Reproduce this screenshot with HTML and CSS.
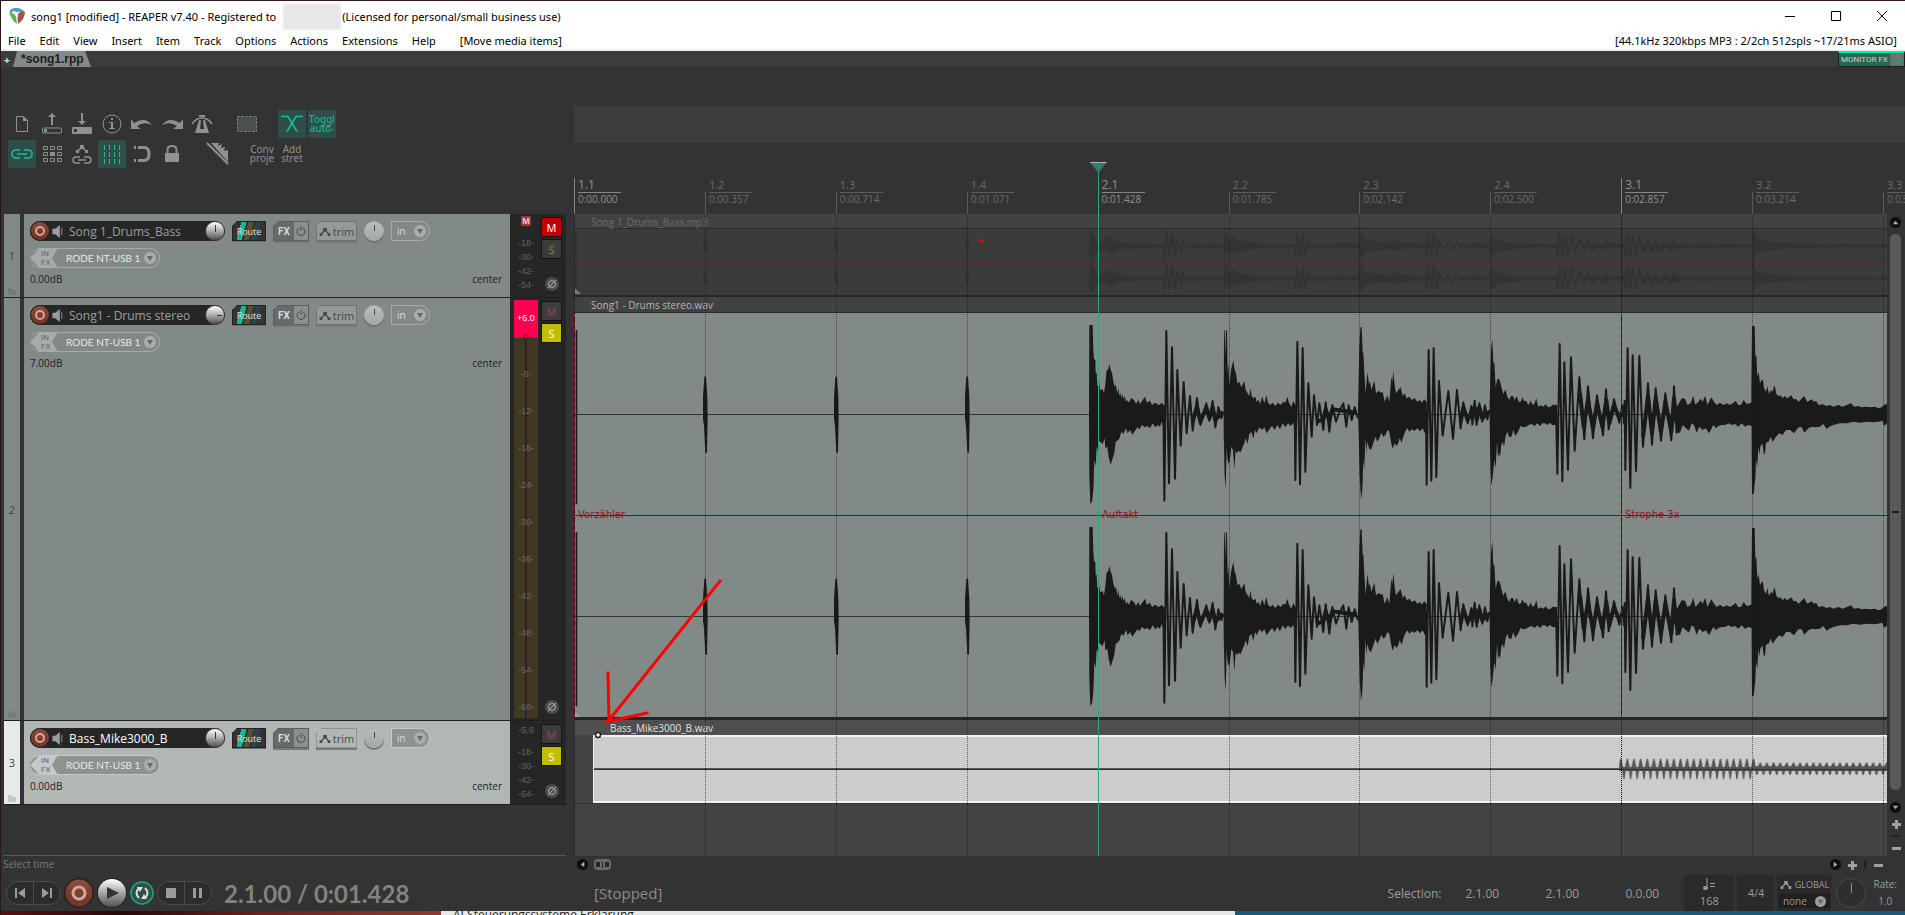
FILE: index.html
```html
<!DOCTYPE html>
<html lang="en">
<head>
    <meta charset="utf-8">
    <meta name="viewport" content="width=device-width, initial-scale=1">
    <title>song1 [modified] - REAPER v7.40</title>
    <link rel="stylesheet" href="styles.css">
</head>
<body>
<svg class="defs" aria-hidden="true">
    <defs>
        <symbol id="speaker" viewBox="0 0 12 14"><path d="M0 4h3l5-4v14l-5-4H0z" fill="#9a9c9b"/><path d="M10 3v8" stroke="#6c6e6d" stroke-width="1.500"/></symbol>
        <symbol id="power" viewBox="0 0 10 10"><path d="M3 2a4 4 0 1 0 4 0M5 0v5" fill="none" stroke="currentColor"/></symbol>
        <symbol id="trim" viewBox="0 0 12 10"><path d="M1 9l5-6 5 6" fill="none" stroke="currentColor" stroke-width="1.500"/><path d="M0 7h3v3H0zM4 1h4v4H4zM9 7h3v3H9z" fill="currentColor"/></symbol>
        <symbol id="drop" viewBox="0 0 12 12"><circle cx="6" cy="6" r="6" fill="currentColor"/><path class="drop-arrow" d="M3 4h6L6 9z"/></symbol>
        <symbol id="folder" viewBox="0 0 8 7"><path d="M0 0h4l1 2h3v5H0z" fill="currentColor"/></symbol>
        <symbol id="phase" viewBox="0 0 14 14"><circle cx="7" cy="7" r="7" fill="#4c4e4d"/><circle cx="7" cy="7" r="3.500" fill="none" stroke="#b0b2b1"/><path d="M3 11l8-8" stroke="#b0b2b1"/></symbol>
        <symbol id="rec" viewBox="0 0 20 20"><circle cx="10" cy="10" r="10" fill="#2a2020"/><circle cx="10" cy="10" r="9" fill="url(#red)"/><circle cx="10" cy="10" r="4" fill="none" stroke="#cfa9a0" stroke-width="2"/></symbol>
        <linearGradient id="red" x1="0" y1="0" x2="0" y2="1"><stop offset="0" stop-color="#8c4f43"/><stop offset=".4" stop-color="#82402f"/><stop offset="1" stop-color="#6e3527"/></linearGradient>
        <linearGradient id="silver" x1="0" y1="0" x2="0" y2="1"><stop offset="0" stop-color="#fff"/><stop offset=".5" stop-color="#a5a5a5"/><stop offset="1" stop-color="#505050"/></linearGradient>

        <!-- one drum channel, centre line at y = 0 -->
        <g id="drums">
            <g fill="currentColor">
                <path d="M5-253h5V270H5zM0-1h3939v2H0z"/>
                <path d="M391-113h5l4 60 1 60-2 108h-5l-4-80-3-20v-68zM784-113h5l4 60 1 60-2 108h-5l-4-80-3-20v-68zM1177-113h5l4 60 1 60-2 108h-5l-4-80-3-20v-68z"/>
            </g>
            <g fill="currentColor" transform="translate(1518 -373)">
                <path d="M27 373L28 105 38 105 40 180 42 207 46 210 47 250 50 248 52 290 57 276 60 300 68 298 72 310 76 282 80 240 84 240 88 222 92 240 96 248 100 275 105 290 108 285 112 312 115 294 118 318 121 308 124 325 127 312 131 328 134 318 138 335 142 330 147 338 153 324 162 330 168 342 175 330 180 342 188 330 196 320 200 338 210 332 216 345 226 338 236 346 246 338 250 345 250 410 245 395 240 410 233 405 226 412 218 400 210 415 202 408 194 412 186 405 178 418 172 412 165 422 157 434 150 420 143 430 138 415 130 432 124 425 118 446 112 452 107 455 103 490 98 505 92 525 86 500 82 470 76 475 74 445 68 462 60 455 55 450 53 482 50 470 47 528 43 510 40 600 36 635 31 642 28 560z"/>
                <path d="M431 350L432 120 434 122 436 200 438 120 441 122 443 250 445 218 448 290 453 240 460 210 464 240 468 250 472 280 478 275 484 292 493 273 497 300 503 310 508 318 511 294 515 318 520 325 526 320 530 335 536 330 540 342 547 320 553 340 559 315 564 338 571 345 578 338 586 348 594 338 602 345 610 335 616 338 622 320 627 338 634 350 640 333 646 345 646 430 640 398 632 408 624 400 616 412 608 400 600 418 592 405 584 420 576 408 568 418 560 430 553 412 546 420 538 412 530 430 525 420 520 446 514 425 508 432 503 462 497 445 493 460 488 470 482 487 476 482 470 490 467 480 463 537 459 480 454 470 449 515 446 522 442 505 440 470 437 597 434 560 431 430z"/>
                <path d="M834 360L838 170 841 112 845 112 848 190 850 186 853 250 857 310 862 246 867 282 870 275 874 300 883 272 888 310 896 303 904 308 908 306 914 335 922 316 928 335 934 260 937 275 940 243 944 285 948 310 955 300 962 292 968 318 974 310 980 325 988 320 995 330 1004 325 1012 335 1020 330 1026 338 1032 328 1040 335 1040 430 1034 428 1028 415 1020 424 1012 415 1004 422 996 418 988 425 982 415 975 425 970 440 965 458 959 445 955 458 950 468 944 460 938 476 933 455 928 425 922 420 916 435 910 440 904 428 898 445 892 455 886 440 880 460 873 480 867 475 862 455 859 488 856 440 853 537 850 510 847 600 843 628 839 560 836 430z"/>
                <path d="M1229 340L1233 180 1237 148 1240 220 1243 218 1247 290 1252 268 1256 266 1260 273 1264 290 1270 312 1276 298 1282 320 1288 330 1293 318 1299 318 1304 330 1310 318 1316 335 1322 335 1327 322 1332 333 1338 332 1345 345 1352 332 1358 345 1364 340 1369 325 1374 350 1382 346 1390 350 1397 343 1404 352 1412 350 1418 344 1428 345 1428 405 1416 405 1410 398 1403 405 1395 400 1388 400 1380 408 1372 400 1364 408 1355 402 1346 405 1338 410 1330 412 1322 408 1314 425 1306 438 1300 420 1294 440 1287 440 1282 425 1277 438 1272 470 1268 455 1264 465 1260 500 1257 490 1254 500 1251 455 1247 533 1243 510 1238 560 1234 588 1231 520 1229 390z"/>
                <path d="M1785 360L1797 340 1805 325 1815 326 1822 345 1832 340 1840 317 1846 345 1855 335 1862 326 1868 335 1876 317 1882 345 1894 322 1902 335 1910 345 1920 338 1930 345 1940 340 1950 345 1958 340 1967 333 1975 345 1983 345 1991 330 2000 342 2010 340 2016 336 2016 408 2005 405 1995 410 1985 400 1975 410 1965 402 1955 405 1945 400 1935 405 1925 405 1915 408 1908 415 1900 405 1887 430 1878 415 1868 420 1858 410 1850 428 1842 405 1835 400 1827 422 1818 415 1808 405 1800 428 1790 428z"/>
                <path d="M2014 300L2016 108 2024 108 2026 200 2029 195 2032 260 2036 247 2040 280 2045 270 2049 270 2052 295 2058 305 2062 288 2067 312 2073 300 2077 305 2084 286 2089 312 2096 318 2102 316 2108 325 2114 318 2122 325 2134 316 2141 328 2148 327 2156 335 2166 325 2172 318 2182 335 2195 328 2202 335 2208 332 2216 345 2228 343 2240 348 2250 345 2260 350 2275 345 2288 350 2300 345 2313 340 2322 350 2335 348 2345 352 2358 350 2370 352 2385 350 2395 355 2405 352 2412 345 2421 342 2421 400 2413 408 2407 392 2395 395 2380 397 2360 395 2340 398 2320 395 2300 400 2280 400 2260 405 2248 410 2240 416 2230 402 2220 410 2205 412 2195 410 2185 415 2173 428 2165 412 2155 412 2142 430 2130 420 2118 420 2108 435 2098 430 2088 440 2078 455 2072 440 2066 455 2058 458 2055 490 2052 494 2047 460 2041 470 2038 494 2035 470 2032 530 2028 510 2026 565 2021 612 2016 612z"/>
            </g>
            <g class="swing" transform="translate(1518 -373)">
                <path d="M250 345L253 632 259 123 267 580 276 172 285 566 292 240 302 467 311 276 320 430 330 318 338 422 351 324 361 405 379 340 388 392 398 333 406 412 415 352 424 385 430 365"/>
                <path d="M644 345L646 570 652 155 660 583 668 174 676 545 685 280 695 440 702 316 711 405 718 340 730 420 737 337 748 425 757 345 768 395 780 360 790 340 799 410 806 346 815 390 824 352 834 385"/>
                <path d="M1038 360L1040 584 1046 180 1054 572 1061 174 1069 562 1077 273 1088 437 1105 303 1119 446 1131 300 1142 415 1150 337 1163 400 1174 348 1177 403 1184 332 1190 405 1198 340 1207 395 1215 346 1222 388 1228 360"/>
                <path d="M1428 345L1432 551 1439 162 1447 574 1453 217 1464 540 1473 202 1484 482 1498 262 1513 448 1524 289 1539 445 1551 316 1569 436 1578 298 1586 418 1602 328 1618 398 1627 345 1632 400 1634 333 1636 540 1643 175 1651 594 1658 196 1668 543 1678 198 1689 470 1704 280 1716 464 1727 295 1743 452 1756 310 1774 451 1782 289 1790 428 1797 345"/>
            </g>
            <g class="swing-wide" transform="translate(1518 -373)">
                <path d="M338 395L351 350 361 395 379 352 388 385 398 352 406 390 428 365M711 395L730 388 737 358 748 390 757 358 830 368M1142 395L1150 352 1163 390 1184 352 1190 390 1198 352 1207 385 1225 365M1500 310L1511 410 1524 330 1539 415 1551 340 1567 410 1579 330 1588 400 1602 345 1618 385 1630 360M1689 440L1704 320 1716 430 1727 325 1743 425 1756 335 1774 425 1782 325 1790 400"/>
            </g>
        </g>
        <pattern id="bass-loud" width="6.650" height="68" patternUnits="userSpaceOnUse"><path d="M0 32h1L2.800 23h1.200L5.700 32h.95v4H0z" fill="#555"/><path d="M-1.800 35L-.5 45h1L1.900 35zM4.850 35l1.300 10h1L8.550 35z" fill="#555"/></pattern>
        <pattern id="bass-soft" width="6.650" height="68" patternUnits="userSpaceOnUse"><path d="M0 31h1l2-4h1l1.500 4h1.150v5H0z" fill="#555"/><path d="M0 35v5h.8L2 35zM6.650 35v5h-.8L4.700 35z" fill="#555"/></pattern>
    </defs>
</svg>

<header class="titlebar">
    <svg class="logo" viewBox="0 0 16 18"><path d="M1 3Q8-2 15 4L12 7Q7 3 1 6z" fill="#4d9fc4"/><path d="M0 5Q6 6 7 10l1 7Q3 14 0 5z" fill="#58b947"/><path d="M9 6q5-3 7-1 0 7-7 12-1-6 0-11z" fill="#a8524f"/><path d="M4 4q3 1 4 5 0-4 3-4" fill="none" stroke="#fff"/></svg>
    <span>song1 [modified] - REAPER v7.40 - Registered to</span>
    <span class="redacted"></span>
    <span>(Licensed for personal/small business use)</span>
    <div class="window-buttons">
        <button aria-label="Minimize"><svg viewBox="0 0 10 10"><path d="M0 5.500h10"/></svg></button>
        <button aria-label="Maximize"><svg viewBox="0 0 10 10"><path d="M.5.5h9v9h-9z"/></svg></button>
        <button aria-label="Close"><svg viewBox="0 0 10 10"><path d="M0 0l10 10M10 0L0 10"/></svg></button>
    </div>
</header>
<nav class="menubar">
    <a href="#">File</a>
    <a href="#">Edit</a>
    <a href="#">View</a>
    <a href="#">Insert</a>
    <a href="#">Item</a>
    <a href="#">Track</a>
    <a href="#">Options</a>
    <a href="#">Actions</a>
    <a href="#">Extensions</a>
    <a href="#">Help</a>
    <a href="#" class="last-action">[Move media items]</a>
    <span class="audio-state">[44.1kHz 320kbps MP3 : 2/2ch 512spls ~17/21ms ASIO]</span>
</nav>
<div class="tabbar">
    <button class="tab-add" aria-label="New project tab">+</button>
    <a href="#" class="tab">*song1.rpp</a>
    <div class="monitor-fx"><button class="monitor-name">MONITOR FX</button><button class="monitor-power" aria-label="Bypass monitor FX"><svg><use href="#power"/></svg></button></div>
</div>

<main class="workspace">
    <section class="left">
        <div class="toolbar">
            <div class="toolrow">
                <button aria-label="New"><svg viewBox="0 0 28 28"><path d="M8.500 6.500h7l4 4v11h-11z" fill="none" stroke="currentColor"/><path d="M15 6v5h5z" fill="currentColor"/></svg></button>
                <button aria-label="Open"><svg viewBox="0 0 28 28"><rect x="4.500" y="18" width="19" height="5" rx="1" fill="none" stroke="currentColor"/><path d="M6 19h3v3H6zM13 15V7h-3l4-4 4 4h-3v8z" fill="currentColor"/></svg></button>
                <button aria-label="Save"><svg viewBox="0 0 28 28"><path d="M5 17h18q1 0 1 1v5q0 1-1 1H5q-1 0-1-1v-5q0-1 1-1zm1 2v3h3v-3zM13 3v8h-3l4 4 4-4h-3V3z" fill="currentColor" fill-rule="evenodd"/></svg></button>
                <button aria-label="Project settings"><svg viewBox="0 0 28 28"><circle cx="14" cy="14" r="9" fill="none" stroke="currentColor"/><path d="M13 8h2v2h-2zM11 12h4v6h2v1h-6v-1h2v-5h-2z" fill="currentColor"/></svg></button>
                <button aria-label="Undo"><svg viewBox="0 0 28 28"><path d="M3 9v10h10l-4-3q7-5 15-1-7-9-18-2z" fill="currentColor"/></svg></button>
                <button aria-label="Redo"><svg viewBox="0 0 28 28"><path d="M25 9v10H15l4-3q-7-5-15-1 7-9 18-2z" fill="currentColor"/></svg></button>
                <button aria-label="Metronome"><svg viewBox="0 0 28 28"><path d="M11 10h2l-1 9h4l-1-9h2l4 13H7z" fill="currentColor"/><path d="M4 14q4-6 10-6t10 6" fill="none" stroke="currentColor" stroke-width="1.500"/><path d="M11 5h6v2h-6z" fill="currentColor"/></svg></button>
                <span class="tool-gap"></span>
                <button aria-label="Marquee"><svg viewBox="0 0 28 28"><rect x="4.500" y="6.500" width="19" height="15" fill="#4b504f" stroke="currentColor" stroke-dasharray="2 2"/></svg></button>
                <span class="tool-gap"></span>
                <button class="on" aria-label="Auto crossfade"><svg viewBox="0 0 28 28"><path d="M3 6.500h7l9 15M25 6.500h-7L9 21.500" fill="none" stroke="currentColor" stroke-width="1.500"/></svg></button>
                <button class="on">Toggl<br>auto-</button>
            </div>
            <div class="toolrow">
                <button class="on" aria-label="Item grouping"><svg viewBox="0 0 28 28"><path d="M12 10H8q-4 0-4 4t4 4h4M16 10h4q4 0 4 4t-4 4h-4M9 14h10" fill="none" stroke="currentColor" stroke-width="1.500"/></svg></button>
                <button aria-label="Ripple edit"><svg viewBox="0 0 28 28"><path d="M5.500 6.500h4v3h-4zM12.500 6.500h4v3h-4zM19.500 6.500h4v3h-4zM5.500 12.500h4v3h-4zM19.500 12.500h4v3h-4zM5.500 18.500h4v3h-4zM12.500 18.500h4v3h-4zM19.500 18.500h4v3h-4z" fill="none" stroke="currentColor"/><path d="M12 12h5v4h-5z" fill="currentColor"/></svg></button>
                <button aria-label="Move envelopes"><svg viewBox="0 0 28 28"><path d="M9 12l5-5 5 5M12 17H8q-3 0-3 3t3 3h4M16 17h4q3 0 3 3t-3 3h-4M10 20h8" fill="none" stroke="currentColor" stroke-width="1.500"/><path d="M8 10h3v3H8zM12 5h4v3h-4zM17 10h3v3h-3z" fill="currentColor"/></svg></button>
                <button class="on" aria-label="Grid lines"><svg viewBox="0 0 28 28"><path d="M6.500 5v19M11.500 5v19M16.500 5v19M21.500 5v19" stroke="currentColor" stroke-dasharray="5 2"/></svg></button>
                <button aria-label="Snap"><svg viewBox="0 0 28 28"><path d="M10 7.500h6q5 0 5 6.500t-5 6.500h-6" fill="none" stroke="currentColor" stroke-width="3"/><path d="M6 6h2v3H6zM6 19h2v3H6z" fill="currentColor"/></svg></button>
                <button aria-label="Lock"><svg viewBox="0 0 28 28"><path d="M7 13h14v9H7z" fill="currentColor"/><path d="M9.500 13v-3q0-4 4.500-4t4.500 4v3" fill="none" stroke="currentColor" stroke-width="2"/></svg></button>
                <span class="tool-gap"></span>
                <button aria-label="Razor edit"><svg viewBox="0 0 28 28"><path d="M8 3h8l-1 3 4-2-1 4 4-1-1 4 4-1v12z" fill="currentColor"/><path d="M4 3l21 21" stroke="currentColor" stroke-width="2"/></svg></button>
                <span class="tool-gap"></span>
                <button>Conv<br>proje</button>
                <button>Add<br>stret</button>
            </div>
        </div>

        <article class="track">
            <div class="track-number">1<svg><use href="#folder"/></svg></div>
            <div class="track-panel">
                <div class="track-row">
                    <div class="namebar">
                        <button aria-label="Record arm"><svg class="rec"><use href="#rec"/></svg></button>
                        <svg class="speaker"><use href="#speaker"/></svg>
                        <input class="name" type="text" value="Song 1_Drums_Bass" aria-label="Track 1 name">
                        <input class="knob bright" type="range" aria-label="Track 1 volume">
                    </div>
                    <button class="route">Route</button>
                    <div class="fx"><button>FX</button><button aria-label="Bypass FX"><svg><use href="#power"/></svg></button></div>
                    <button class="trim"><svg><use href="#trim"/></svg>trim</button>
                    <input class="knob flat" type="range" aria-label="Track 1 pan">
                    <label class="in"><select aria-label="Track 1 input mode"><option>in</option></select><svg><use href="#drop"/></svg></label>
                </div>
                <label class="infx"><span class="infx-tag">IN<br>FX</span><select aria-label="Track 1 input"><option>RODE NT-USB 1</option></select><svg><use href="#drop"/></svg></label>
                <div class="track-values"><span>0.00dB</span><span>center</span></div>
            </div>
            <div class="track-meter">
                <div class="scale short"><b class="muted-tag">M</b><i>-18-</i><i>-30-</i><i>-42-</i><i>-54-</i></div>
                <div class="track-buttons"><button class="mute active">M</button><button class="solo">S</button><button class="phase" aria-label="Phase"><svg><use href="#phase"/></svg></button></div>
            </div>
        </article>

        <article class="track tall">
            <div class="track-number">2<svg><use href="#folder"/></svg></div>
            <div class="track-panel">
                <div class="track-row">
                    <div class="namebar">
                        <button aria-label="Record arm"><svg class="rec"><use href="#rec"/></svg></button>
                        <svg class="speaker"><use href="#speaker"/></svg>
                        <input class="name" type="text" value="Song1 - Drums stereo" aria-label="Track 2 name">
                        <input class="knob bright turned" type="range" aria-label="Track 2 volume">
                    </div>
                    <button class="route">Route</button>
                    <div class="fx"><button>FX</button><button aria-label="Bypass FX"><svg><use href="#power"/></svg></button></div>
                    <button class="trim"><svg><use href="#trim"/></svg>trim</button>
                    <input class="knob flat" type="range" aria-label="Track 2 pan">
                    <label class="in"><select aria-label="Track 2 input mode"><option>in</option></select><svg><use href="#drop"/></svg></label>
                </div>
                <label class="infx"><span class="infx-tag">IN<br>FX</span><select aria-label="Track 2 input"><option>RODE NT-USB 1</option></select><svg><use href="#drop"/></svg></label>
                <div class="track-values"><span>7.00dB</span><span>center</span></div>
            </div>
            <div class="track-meter">
                <div class="scale long"><b>+6.0</b><i class="zero">-0-</i><i>-6-</i><i>-12-</i><i>-18-</i><i>-24-</i><i>-30-</i><i>-36-</i><i>-42-</i><i>-48-</i><i>-54-</i><i>-60-</i></div>
                <div class="track-buttons"><button class="mute">M</button><button class="solo active">S</button><button class="phase" aria-label="Phase"><svg><use href="#phase"/></svg></button></div>
            </div>
        </article>

        <article class="track selected">
            <div class="track-number">3<svg><use href="#folder"/></svg></div>
            <div class="track-panel">
                <div class="track-row">
                    <div class="namebar">
                        <button aria-label="Record arm"><svg class="rec"><use href="#rec"/></svg></button>
                        <svg class="speaker"><use href="#speaker"/></svg>
                        <input class="name" type="text" value="Bass_Mike3000_B" aria-label="Track 3 name">
                        <input class="knob bright" type="range" aria-label="Track 3 volume">
                    </div>
                    <button class="route">Route</button>
                    <div class="fx"><button>FX</button><button aria-label="Bypass FX"><svg><use href="#power"/></svg></button></div>
                    <button class="trim"><svg><use href="#trim"/></svg>trim</button>
                    <input class="knob flat" type="range" aria-label="Track 3 pan">
                    <label class="in"><select aria-label="Track 3 input mode"><option>in</option></select><svg><use href="#drop"/></svg></label>
                </div>
                <label class="infx"><span class="infx-tag">IN<br>FX</span><select aria-label="Track 3 input"><option>RODE NT-USB 1</option></select><svg><use href="#drop"/></svg></label>
                <div class="track-values"><span>0.00dB</span><span>center</span></div>
            </div>
            <div class="track-meter">
                <div class="scale short"><i class="peak">-5.9</i><i>-18-</i><i>-30-</i><i>-42-</i><i>-54-</i></div>
                <div class="track-buttons"><button class="mute">M</button><button class="solo active">S</button><button class="phase" aria-label="Phase"><svg><use href="#phase"/></svg></button></div>
            </div>
        </article>
        <div class="tracks-rest"></div>
        <div class="hint">Select time</div>
    </section>

    <section class="right">
        <div class="region-lane"></div>
        <div class="ruler">
            <div class="tick bar"><b>1.1</b><span>0:00.000</span></div>
            <div class="tick"><b>1.2</b><span>0:00.357</span></div>
            <div class="tick"><b>1.3</b><span>0:00.714</span></div>
            <div class="tick"><b>1.4</b><span>0:01.071</span></div>
            <div class="tick bar"><b>2.1</b><span>0:01.428</span></div>
            <div class="tick"><b>2.2</b><span>0:01.785</span></div>
            <div class="tick"><b>2.3</b><span>0:02.142</span></div>
            <div class="tick"><b>2.4</b><span>0:02.500</span></div>
            <div class="tick bar"><b>3.1</b><span>0:02.857</span></div>
            <div class="tick"><b>3.2</b><span>0:03.214</span></div>
            <div class="tick"><b>3.3</b><span>0:03.571</span></div>
        </div>
        <div class="arrange-wrap">
            <div class="arrange">
                <div class="lane muted">
                    <div class="item-label">Song 1_Drums_Bass.mp3</div>
                    <div class="item">
                        <svg viewBox="0 0 3939 65" preserveAspectRatio="none"><use href="#drums" transform="translate(0 16.500) scale(1 .0556)"/><use href="#drums" transform="translate(0 48.500) scale(1 .0556)"/></svg>
                    </div>
                </div>
                <div class="lane tall">
                    <div class="item-label">Song1 - Drums stereo.wav</div>
                    <div class="item">
                        <svg viewBox="0 0 3939 1212" preserveAspectRatio="none"><use href="#drums" y="304"/><use href="#drums" y="910"/></svg>
                        <div class="markers"><span>Vorzähler</span><span>Auftakt</span><span>Strophe 3x</span></div>
                    </div>
                </div>
                <div class="lane selected">
                    <div class="item-label">Bass_Mike3000_B.wav</div>
                    <div class="item">
                        <svg viewBox="0 0 1294 68" preserveAspectRatio="none"><path d="M0 33h1294v1H0z" fill="#555"/><rect x="1026" width="136" height="68" fill="url(#bass-loud)"/><rect x="1162" width="132" height="68" fill="url(#bass-soft)"/></svg>
                    </div>
                </div>
                <div class="gridlines"><i class="bar"></i><i></i><i></i><i></i><i class="bar"></i><i></i><i></i><i></i><i class="bar"></i><i></i><i></i></div>
                <div class="cursor"></div>
                <svg class="annotation"><path d="M146 367L36 505M34 459l1 48M73 499l-41 9" fill="none" stroke="#f00" stroke-width="3" stroke-linecap="square"/><path d="M406 25h3v3h-3z" fill="#f00"/><path d="M1 74v6h6zM1 497v6h6z" fill="#a5aaa8" opacity=".6"/><circle cx="24" cy="521" r="2.500" fill="#fff" stroke="#222" stroke-width="1.500"/></svg>
            </div>
            <div class="vscroll">
                <button class="round" aria-label="Scroll up"><svg viewBox="0 0 12 12"><path d="M3 8h6L6 4z"/></svg></button>
                <div class="thumb"></div>
                <button class="round" aria-label="Scroll down"><svg viewBox="0 0 12 12"><path d="M3 4h6L6 8z"/></svg></button>
                <button class="zoom" aria-label="Zoom in vertically"><svg viewBox="0 0 10 10"><path d="M4 1h3v3h3v3H7v3H4V7H1V4h3z"/></svg></button>
                <hr>
                <button class="zoom" aria-label="Zoom out vertically"><svg viewBox="0 0 10 10"><path d="M1 4h9v3H1z"/></svg></button>
            </div>
        </div>
        <div class="hscroll">
            <button class="round" aria-label="Scroll left"><svg viewBox="0 0 12 12"><path d="M8 3v6L4 6z"/></svg></button>
            <button class="hthumb" aria-label="Scroll position"><svg viewBox="0 0 17 11"><rect width="17" height="11" rx="4" fill="#6a6a6a"/><path d="M8 3h1v6H8zM2 3h4v5H2zM11 3h4v5h-4z" fill="#262626"/></svg></button>
            <span class="push"></span>
            <button class="round" aria-label="Scroll right"><svg viewBox="0 0 12 12"><path d="M4 3v6l4-3z"/></svg></button>
            <button class="zoom" aria-label="Zoom in"><svg viewBox="0 0 10 10"><path d="M4 1h3v3h3v3H7v3H4V7H1V4h3z"/></svg></button>
            <hr>
            <button class="zoom" aria-label="Zoom out"><svg viewBox="0 0 10 10"><path d="M1 4h9v3H1z"/></svg></button>
        </div>
    </section>
</main>

<footer class="transport">
    <div class="transport-buttons">
        <div class="pair">
            <button aria-label="Go to start"><svg viewBox="0 0 10 10"><path d="M0 0h2v10H0zM10 0v10L3 5z"/></svg></button>
            <button aria-label="Go to end"><svg viewBox="0 0 10 10"><path d="M8 0h2v10H8zM0 0v10l7-5z"/></svg></button>
        </div>
        <button class="big" aria-label="Record"><svg viewBox="0 0 20 20"><use href="#rec"/></svg></button>
        <button class="big" aria-label="Play"><svg viewBox="0 0 30 30"><circle cx="15" cy="15" r="15" fill="#222"/><circle cx="15" cy="15" r="14" fill="url(#silver)"/><path d="M10 9l12 6-12 6z" fill="#333"/></svg></button>
        <button class="loop" aria-label="Repeat"><svg viewBox="0 0 24 24"><circle cx="12" cy="12" r="11" fill="#2d5047" stroke="#18a883" stroke-width="1.500"/><path d="M9 17q-5-5 0-10M15 7q5 5 0 10" fill="none" stroke="#ddd" stroke-width="2"/><path d="M7 6h6l-3 5zM17 18h-6l3-5z" fill="#ddd"/></svg></button>
        <div class="pair">
            <button aria-label="Stop"><svg viewBox="0 0 10 10"><path d="M0 0h10v10H0z"/></svg></button>
            <button aria-label="Pause"><svg viewBox="0 0 10 10"><path d="M0 0h3v10H0zM6 0h3v10H6z"/></svg></button>
        </div>
    </div>
    <output class="position">2.1.00 / 0:01.428</output>
    <output class="play-state">[Stopped]</output>
    <div class="selection"><span>Selection:</span><span>2.1.00</span><span>2.1.00</span><span>0.0.00</span></div>
    <div class="tempo"><svg viewBox="0 0 12 12"><path d="M4 0v9M7 5.500h5M7 8.500h5" stroke="#a0a0a0"/><ellipse cx="2.500" cy="10" rx="2.500" ry="2" fill="#a0a0a0"/></svg><span>168</span></div>
    <div class="signature">4/4</div>
    <div class="global"><span><svg><use href="#trim"/></svg>GLOBAL</span><label><select aria-label="Global automation override"><option>none</option></select><svg><use href="#drop"/></svg></label></div>
    <input class="rate-knob" type="range" aria-label="Playback rate">
    <div class="rate"><span>Rate:</span><span>1.0</span></div>
</footer>
<div class="desktop"><div class="desktop-red"></div><div class="desktop-doc">AI Steuerungssysteme Erklärung</div><div class="desktop-blue"></div></div>
</body>
</html>
```
FILE: styles.css
```css
:root {
    --bg: #333333;
    --dark: #262626;
    --panel: #828a88;
    --icon: #8c9290;
    --green: #1abc98;
    --green-bg: #2e4f49;
}

* {
    box-sizing: border-box;
}

body {
    background: var(--bg);
    border-left: 1px solid #2b1719;
    border-top: 1px solid #33191f;
    display: flex;
    flex-direction: column;
    font-family: "Open Sans", "Noto Sans", sans-serif;
    font-size: 11px;
    margin: 0;
    min-height: 100vh;
    overflow-x: hidden;
}

button, input, select {
    appearance: none;
    background: none;
    border: 0;
    border-radius: 0;
    color: inherit;
    font: inherit;
    margin: 0;
    padding: 0;
}

button {
    align-items: center;
    display: flex;
    justify-content: center;
}

button svg {
    display: block;
}

a {
    color: inherit;
    text-decoration: none;
}

hr {
    background: #222;
    border: 0;
    margin: 0;
}

.defs {
    height: 0;
    position: absolute;
    width: 0;
}

/* window chrome */

.titlebar {
    align-items: center;
    background: #fff;
    color: #000;
    display: flex;
    font-family: "Noto Sans", sans-serif;
    font-size: 11px;
    height: 30px;
    padding-left: 8px;
}

.logo {
    height: 18px;
    margin-right: 6px;
    width: 16px;
}

.redacted {
    align-self: stretch;
    background: #e6e7e6;
    filter: blur(1px);
    height: 26px;
    margin: 3px 1px 0 7px;
    width: 58px;
}

.window-buttons {
    align-self: stretch;
    display: flex;
    margin-left: auto;
}

.window-buttons button {
    width: 46px;
}

.window-buttons svg {
    fill: none;
    height: 10px;
    stroke: #000;
    width: 10px;
}

.menubar {
    align-items: center;
    background: #fff;
    border-bottom: 2px solid #f0f0f0;
    color: #000;
    display: flex;
    font-family: "Noto Sans", sans-serif;
    font-size: 11px;
    gap: 14px;
    height: 20px;
    padding: 0 8px 0 7px;
}

.last-action {
    margin-left: 10px;
}

.audio-state {
    margin-left: auto;
}

.tabbar {
    background: #3c3c3c;
    color: #1d1d1d;
    display: flex;
    height: 16px;
}

.tab-add {
    color: #ddd;
    font-weight: bold;
    width: 12px;
}

.tab {
    background: var(--panel);
    clip-path: polygon(4px 0, 72px 0, 100% 100%, 0 100%);
    font-family: "Liberation Sans", Arial, sans-serif;
    font-size: 12px;
    font-weight: bold;
    line-height: 16px;
    padding: 0 10px 0 8px;
    width: 78px;
}

.monitor-fx {
    background: #2a6652;
    border: 1px solid #1d1d1d;
    border-top: 2px solid #00f0a8;
    color: #c5d6d0;
    display: flex;
    font-family: Roboto, sans-serif;
    font-size: 8px;
    margin-left: auto;
    white-space: nowrap;
    width: 67px;
}

.monitor-name {
    flex: 1;
}

.monitor-power {
    background: #6a6e6c;
    color: var(--green);
    width: 14px;
}

.monitor-power svg {
    height: 9px;
    width: 9px;
}

/* main split */

.workspace {
    display: grid;
    flex: 1;
    grid-template-columns: 573px minmax(0, 1fr);
}

.left, .right {
    display: flex;
    flex-direction: column;
}

.toolbar {
    color: var(--icon);
    display: flex;
    flex-direction: column;
    gap: 2px;
    height: 147px;
    padding: 43px 0 0 7px;
}

.toolrow {
    display: flex;
    gap: 2px;
}

.toolrow button {
    font-family: "Noto Sans", sans-serif;
    font-size: 10px;
    height: 28px;
    line-height: 9px;
    text-align: center;
    width: 28px;
}

.toolrow svg {
    height: 28px;
    width: 28px;
}

.toolrow .on {
    background: var(--green-bg);
    color: var(--green);
}

.tool-gap {
    width: 13px;
}

/* track control panels */

.track {
    border-bottom: 1px solid #1e2020;
    display: flex;
    height: 84px;
    margin: 0 8px 0 3px;
}

.track.tall {
    height: 423px;
}

.track-number {
    align-items: center;
    background: var(--panel);
    color: #3c4342;
    display: flex;
    flex-direction: column;
    justify-content: center;
    margin-right: 4px;
    position: relative;
    width: 16px;
}

.track-number svg {
    bottom: 2px;
    color: #747b79;
    height: 7px;
    position: absolute;
    width: 8px;
}

.track-panel {
    background: var(--panel);
    color: #1c1f1e;
    flex: 1;
    padding: 7px 8px 0 6px;
}

.track-row {
    align-items: center;
    display: flex;
    gap: 7px;
    height: 20px;
    margin-bottom: 7px;
}

.namebar {
    align-items: center;
    background: var(--dark);
    border-radius: 10px;
    color: #9aa09e;
    display: flex;
    height: 20px;
    width: 195px;
}

.rec {
    height: 20px;
    width: 20px;
}

.speaker {
    height: 13px;
    margin: 0 5px 0 2px;
    width: 12px;
}

.name {
    flex: 1;
    font-size: 12px;
    min-width: 0;
}

.knob {
    background: linear-gradient(#333, #333) 50% 3px / 1px 7px no-repeat, linear-gradient(#fff, #b5b5b5 45%, #4e4e4e);
    border: 1px solid #3a3a3a;
    border-radius: 50%;
    height: 20px;
    width: 20px;
}

.knob.turned {
    background: linear-gradient(#333, #333) 11px 9px / 5px 1px no-repeat, linear-gradient(#fff, #b5b5b5 45%, #4e4e4e);
}

.knob.flat {
    background: linear-gradient(#444, #444) 50% 3px / 1px 6px no-repeat, linear-gradient(#b9bebc, #a4a9a7);
    border-color: #a9aeac;
    box-shadow: 0 2px 0 #6d7472;
}

.knob::-webkit-slider-thumb, .rate-knob::-webkit-slider-thumb {
    appearance: none;
    height: 0;
    width: 0;
}

.route {
    background: linear-gradient(105deg, transparent 8px, #18b695 8px 13px, transparent 13px 15px, #57522b 15px 20px, transparent 20px 22px, #2a4351 22px 27px, transparent 27px), #333;
    border: 1px solid #222;
    box-shadow: 0 1px 0 #6a706e;
    color: #e0e3e2;
    font-size: 9px;
    height: 20px;
    width: 34px;
}

.fx {
    border: 1px solid #595f5d;
    box-shadow: 0 2px 0 #737a78;
    color: #d5d8d7;
    display: flex;
    font-family: Roboto, sans-serif;
    font-size: 10px;
    font-weight: bold;
    height: 20px;
    width: 36px;
}

.fx button {
    background: #666b69;
    width: 20px;
}

.fx button + button {
    background: #8a908e;
    color: #474c4a;
    width: 14px;
}

.fx svg {
    height: 10px;
    width: 10px;
}

.trim {
    background: #949a98;
    border: 1px solid #6d7472;
    box-shadow: 0 2px 0 #737a78;
    color: #444a48;
    gap: 2px;
    height: 20px;
    width: 41px;
}

.trim svg {
    height: 9px;
    width: 12px;
}

.route, .fx, .trim {
    clip-path: polygon(5px 0, 100% 0, 100% 22px, 0 22px, 0 5px);
}

.in, .infx {
    align-items: center;
    border: 1px solid #a6acaa;
    border-radius: 0 10px 10px 0;
    color: #d8dcdb;
    display: flex;
    height: 20px;
}

.in {
    font-size: 10px;
    justify-content: space-between;
    padding: 0 3px 0 5px;
    width: 39px;
}

.in svg, .infx svg {
    color: #a9aeac;
    height: 12px;
    width: 12px;
}

.drop-arrow {
    fill: #626967;
}

.infx {
    border-left: 0;
    border-radius: 10px;
    font-size: 10px;
    width: 130px;
}

.infx select {
    color: #e6e9e8;
    flex: 1;
    font-family: Lato, sans-serif;
    padding-left: 8px;
}

.infx svg {
    margin-right: 3px;
}

.infx-tag {
    background: #a6acaa;
    clip-path: polygon(0 50%, 10px 0, 100% 0, 22px 50%, 100% 100%, 10px 100%);
    color: #636967;
    font-family: Roboto, sans-serif;
    font-size: 8px;
    height: 20px;
    line-height: 9px;
    padding: 1px 0 0 11px;
    width: 28px;
}

.track-values {
    display: flex;
    font-size: 10px;
    justify-content: space-between;
    line-height: 16px;
    padding-top: 3px;
}

.track.selected .track-number {
    background: #e8eae9;
}

.track.selected .track-number svg {
    color: #c5c9c8;
}

.track.selected .track-panel {
    background: #b0b7b5;
}

.track.selected .name {
    color: #fff;
}

.track.selected .trim {
    background: #b0b7b5;
    border-color: #8c9391;
}

.track.selected .in, .track.selected .infx {
    background: #8c9391;
    border-color: #c4cac8;
}

.track.selected .infx-tag {
    background: #c4cac8;
}

.track-meter {
    background: var(--dark);
    display: flex;
    gap: 3px;
    padding: 2px 4px 0 4px;
    width: 56px;
}

.scale {
    align-items: center;
    color: #626262;
    display: flex;
    flex-direction: column;
    font-family: "Liberation Sans", Arial, sans-serif;
    font-size: 9px;
    line-height: 14px;
    width: 24px;
}

.scale i {
    font-style: normal;
}

.muted-tag {
    background: #9c3434;
    color: #eccccc;
    line-height: 10px;
    margin-bottom: 10px;
    padding: 0 1px;
}

.peak {
    margin-bottom: 8px;
}

.scale.long {
    background: linear-gradient(#ff0050 38px, transparent 38px), linear-gradient(90deg, #403822 11px, #262626 11px 13px, #403822 13px);
    color: #6e6a5e;
    height: 418px;
    line-height: 37px;
}

.scale.long b {
    color: #fff;
    font-weight: normal;
    line-height: 36px;
}

.scale.long .zero {
    color: #700020;
    line-height: 2px;
    margin-bottom: 18px;
}

.track-buttons {
    display: flex;
    flex: 1;
    flex-direction: column;
    gap: 2px;
    padding: 1px 0 6px;
}

.mute, .solo {
    background: #3c3c3c;
    border: 1px solid #151515;
    color: #8e4a46;
    font-size: 11px;
    height: 20px;
    width: 21px;
}

.solo {
    color: #8e8c3e;
}

.mute.active {
    background: #c40000;
    color: #fff;
}

.solo.active {
    background: #c1be00;
    color: #fff;
}

.phase {
    margin-top: auto;
}

.phase svg {
    height: 14px;
    width: 14px;
}

.tracks-rest {
    border-bottom: 1px solid #555;
    flex: 1;
    margin: 0 8px 0 2px;
}

.hint {
    color: #7a7a7a;
    font-size: 10px;
    height: 19px;
    line-height: 17px;
    padding-left: 2px;
}

/* ruler and arrange view */

.region-lane {
    background: #3c3c3c;
    height: 37px;
    margin-top: 39px;
}

.ruler, .gridlines {
    display: grid;
    grid-template-columns: repeat(10, minmax(0, 1309fr)) minmax(0, 220fr);
}

.ruler {
    align-items: end;
    height: 71px;
    overflow: hidden;
}

.tick {
    border-left: 1px solid #5c5c5c;
    color: #6a6a6a;
    display: flex;
    flex-direction: column;
    height: 22px;
    padding-left: 3px;
}

.tick b {
    border-bottom: 1px solid #5c5c5c;
    font-weight: normal;
    line-height: 14px;
    margin-top: -14px;
    width: 43px;
}

.tick span {
    font-size: 10px;
    line-height: 13px;
}

.tick.bar {
    border-color: #858585;
    color: #8f8f8f;
    height: 36px;
}

.tick.bar b {
    border-color: #858585;
    font-size: 12px;
    margin-top: 0;
}

.arrange-wrap {
    display: flex;
    flex: 1;
}

.arrange {
    background: #444;
    flex: 1;
    position: relative;
}

.lane {
    border-bottom: 2px solid #252626;
    display: flex;
    flex-direction: column;
    height: 83px;
}

.lane.tall {
    border-bottom-width: 3px;
    height: 423px;
}

.item-label {
    background: #424242;
    border-bottom: 1px solid #2a2b2b;
    color: #b5b5b5;
    font-size: 10px;
    height: 16px;
    line-height: 16px;
    padding-left: 17px;
}

.item {
    background: var(--panel);
    color: #1a1a1a;
    flex: 1;
    min-height: 0;
    position: relative;
}

.item svg {
    display: block;
    height: 100%;
    width: 100%;
}

.item::after {
    background: #830d0d;
    content: "";
    height: 1px;
    left: 0;
    position: absolute;
    right: 0;
    top: 50%;
}

.swing, .swing-wide {
    fill: none;
    stroke: currentColor;
    stroke-linejoin: round;
}

.swing path, .swing-wide path {
    stroke-width: 2px;
    vector-effect: non-scaling-stroke;
}

.swing-wide path {
    stroke-width: 4px;
}

.lane.muted .item-label {
    color: #6c6c6c;
    height: 15px;
}

.lane.muted .item {
    background: #3a3c3b;
    color: #323333;
}

.lane.muted .item::after {
    background: #5a2b2a;
}

.lane.selected {
    border-bottom: 1px solid #333;
    height: 84px;
}

.lane.selected .item-label {
    background: #4f4f4f;
    border: 0;
    color: #e5e5e5;
    height: 15px;
    padding-left: 36px;
}

.lane.selected .item {
    background: #cbcccb;
    border-bottom: 2px solid #f2f2f2;
    border-top: 2px solid #f2f2f2;
    border-left: 1px solid #f2f2f2;
    margin-left: 19px;
}

.markers {
    color: #8f1414;
    display: grid;
    font-family: "DejaVu Sans", sans-serif;
    font-size: 10px;
    grid-template-columns: 524fr 523fr 266fr;
    inset: 0;
    line-height: 404px;
    position: absolute;
}

.markers span {
    background: repeating-linear-gradient(#a30f14 0 4px, #222 4px 5px, transparent 5px 6px, #222 6px 7px, transparent 7px 8px) 0 0 / 1px 100% no-repeat;
    padding-left: 4px;
}

.markers span:nth-child(2) {
    background: none;
}

.gridlines {
    inset: 0;
    pointer-events: none;
    position: absolute;
}

.arrange .gridlines {
    grid-template-columns: repeat(10, minmax(0, 1309fr)) minmax(0, 40fr);
}

.gridlines i {
    background: repeating-linear-gradient(rgba(20, 20, 20, .6) 0 1px, transparent 1px 2px) 0 0 / 1px 100% no-repeat;
}

.gridlines .bar {
    background: repeating-linear-gradient(#111 0 1px, transparent 1px 2px) 0 0 / 1px 100% no-repeat;
}

/* stretch markers stay visible above the grid */
.lane.tall .markers {
    z-index: 1;
}

.cursor {
    background: #25a58b;
    bottom: 0;
    left: 39.9%;
    position: absolute;
    top: -52px;
    width: 1px;
    z-index: 2;
}

.cursor::before {
    background: #36796d;
    border-top: 1px solid #b5b5b5;
    clip-path: polygon(0 0, 100% 0, 50% 100%);
    content: "";
    height: 10px;
    left: -8px;
    position: absolute;
    width: 17px;
}

.annotation {
    height: 100%;
    inset: 0;
    pointer-events: none;
    position: absolute;
    width: 100%;
    z-index: 2;
}

.vscroll {
    align-items: center;
    display: flex;
    flex-direction: column;
    gap: 6px;
    padding: 3px 1px 3px 0;
    width: 18px;
}

.thumb {
    background: linear-gradient(#1c1c1c, #1c1c1c) 50% 50% / 7px 2px no-repeat, #5a5a5a;
    border-radius: 5px;
    flex: 1;
    width: 11px;
}

.vscroll .thumb {
    margin-bottom: 6px;
}

.round {
    background: #0e0e0e;
    border-radius: 50%;
    height: 11px;
    width: 11px;
}

.round svg {
    fill: #aaa;
    height: 11px;
    width: 11px;
}

.zoom svg {
    fill: #a0a0a0;
    height: 10px;
    width: 10px;
}

.vscroll hr {
    height: 2px;
    width: 9px;
}

.hscroll {
    align-items: center;
    display: flex;
    gap: 6px;
    height: 19px;
    padding: 0 22px 2px 3px;
}

.hscroll hr {
    height: 9px;
    margin: 0 1px;
    width: 2px;
}

.hthumb svg {
    height: 11px;
    width: 17px;
}

.push {
    flex: 1;
}

/* transport */

.transport {
    align-items: center;
    color: #9b9b9b;
    display: flex;
    font-size: 12px;
    height: 36px;
}

.transport-buttons {
    align-items: center;
    display: flex;
    gap: 3px;
    padding-left: 5px;
}

.pair {
    background: #2c2c2c;
    border: 1px solid #4c4c4c;
    border-radius: 12px;
    display: flex;
    height: 24px;
    width: 55px;
}

.pair button {
    flex: 1;
}

.pair button + button {
    border-left: 1px solid #4c4c4c;
}

.pair svg {
    fill: #9b9b9b;
    height: 10px;
    width: 10px;
}

.big svg {
    height: 30px;
    width: 30px;
}

.big + .loop svg {
    height: 24px;
    width: 24px;
}

.position {
    color: #828282;
    font-family: Lato, sans-serif;
    font-size: 24px;
    font-weight: bold;
    margin-left: 12px;
    width: 370px;
}

.play-state {
    font-size: 15px;
    color: #8c8c8c;
}

.selection {
    display: flex;
    gap: 36px;
    margin: 0 15px 0 auto;
}

.selection span {
    min-width: 44px;
}

.selection span:first-child {
    margin-right: -12px;
}

.tempo, .signature, .global {
    align-items: center;
    align-self: stretch;
    background: #2a2a2a;
    display: flex;
    flex-direction: column;
    font-size: 11px;
    justify-content: space-evenly;
    line-height: 14px;
    margin-right: 3px;
}

.tempo {
    width: 50px;
}

.tempo svg {
    height: 12px;
    width: 12px;
}

.signature {
    width: 37px;
}

.global {
    font-size: 9px;
    width: 54px;
}

.global span, .global label {
    align-items: center;
    display: flex;
    gap: 3px;
}

.global span svg {
    height: 9px;
    width: 12px;
}

.global label {
    background: #202020;
    font-size: 10px;
    gap: 8px;
    padding: 0 4px;
}

.global label svg {
    height: 11px;
    width: 11px;
}

.rate-knob {
    background: linear-gradient(#8a8a8a, #8a8a8a) 50% 4px / 1px 10px no-repeat, #2e2e2e;
    border: 1px solid #4a4a4a;
    border-radius: 50%;
    height: 30px;
    margin: 0 7px 0 2px;
    width: 30px;
}

.rate {
    align-items: center;
    display: flex;
    flex-direction: column;
    font-size: 10px;
    gap: 2px;
    line-height: 15px;
    margin-right: 8px;
}

/* strip of desktop under the window */

.desktop {
    display: flex;
    height: 4px;
    overflow: hidden;
}

.desktop-red {
    background: linear-gradient(90deg, #571214, #250a0c 28%, #6a2320 60%, #8b3a35);
    width: 440px;
}

.desktop-doc {
    background: #e8e8e8;
    color: #222;
    flex: 1;
    font-size: 12px;
    line-height: 8px;
    padding-left: 12px;
}

.desktop-blue {
    background: #1d5877;
    width: 670px;
}
```
